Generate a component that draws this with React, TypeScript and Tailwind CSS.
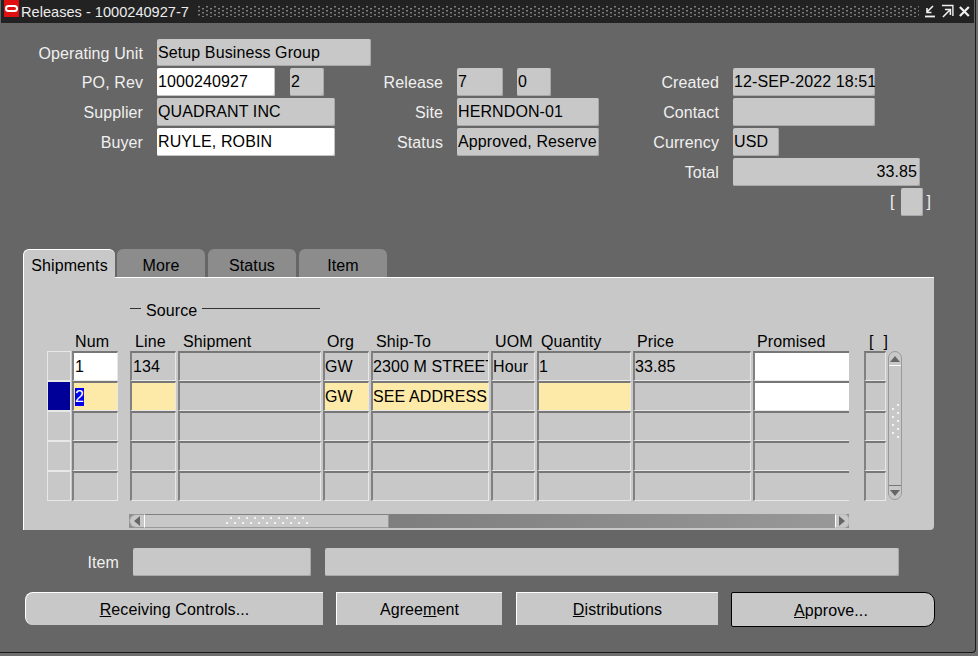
import React from "react";

const FONT = "font-['Liberation_Sans',Arial,sans-serif]";

function Label({ short, children }: { short?: boolean; children: React.ReactNode }) {
  return (
    <div className={`flex ${short ? "h-[27px]" : "h-[28px]"} items-center justify-end whitespace-nowrap pt-[2px] text-[#f0f0f0]`}>
      {children}
    </div>
  );
}

function Field({
  w,
  white,
  right,
  short,
  children,
}: {
  w: string;
  white?: boolean;
  right?: boolean;
  short?: boolean;
  children?: React.ReactNode;
}) {
  return (
    <div
      className={`${w} flex ${short ? "h-[27px]" : "h-[28px]"} shrink-0 items-center overflow-hidden whitespace-nowrap rounded-[2px] px-[1px] text-black ${
        white ? "bg-white shadow-[inset_-1px_-1px_0_#c4c4c4]" : "bg-[#c8c8c8] shadow-[inset_-1px_-1px_0_#a8a8a8]"
      } ${right ? "justify-end pr-[3px]" : ""}`}
    >
      {children}
    </div>
  );
}

function Grip({ w, h, vertical }: { w: number; h: number; vertical?: boolean }) {
  const dots: React.ReactNode[] = [];
  if (vertical) {
    for (let i = 0; i < 5; i++) {
      if (i < 4) dots.push(<rect key={`a${i}`} x={2} y={4 + i * 8} width={2} height={2} fill="#f2f2f2" />);
      dots.push(<rect key={`b${i}`} x={7} y={0 + i * 8} width={2} height={2} fill="#f2f2f2" />);
    }
  } else {
    for (let i = 0; i < 11; i++) {
      if (i < 10) dots.push(<rect key={`a${i}`} x={4 + i * 8} y={0} width={2} height={2} fill="#f2f2f2" />);
      dots.push(<rect key={`b${i}`} x={0 + i * 8} y={5} width={2} height={2} fill="#f2f2f2" />);
    }
  }
  return (
    <svg width={w} height={h} className="block">
      {dots}
    </svg>
  );
}

type Kind = "plain" | "white" | "yellow";

function Cell({ kind = "plain", pad, open, children }: { kind?: Kind; pad?: boolean; open?: boolean; children?: React.ReactNode }) {
  const bg = kind === "white" ? "bg-white" : kind === "yellow" ? "bg-[#fde9a8]" : "bg-[#c8c8c8]";
  return (
    <div
      className={`flex h-[30px] items-center overflow-hidden whitespace-nowrap border-b border-l-2 border-t-2 border-b-[#e8e8e8] border-l-[#808080] border-t-[#777777] text-black ${
        open ? "" : "border-r border-r-[#e8e8e8]"
      } ${pad ? "pl-px" : ""} ${bg}`}
    >
      {children}
    </div>
  );
}

function Sel({ on }: { on?: boolean }) {
  return <div className={`-mx-px h-[30px] border border-[#e8e8e8] ${on ? "bg-[#000099]" : "bg-[#c8c8c8]"}`} />;
}

function Head({ pad = "pl-[3px]", children }: { pad?: string; children?: React.ReactNode }) {
  return <div className={`h-[19px] whitespace-nowrap pt-px leading-[18px] text-black ${pad}`}>{children}</div>;
}

function Tab({ w, active, children }: { w: string; active?: boolean; children: React.ReactNode }) {
  return (
    <div
      className={`${w} flex items-center justify-center rounded-t-[6px] text-black ${
        active ? "relative z-10 -mb-px h-[29px] border-l border-t border-white bg-[#c8c8c8] pt-[4px]" : "h-[28px] bg-[#8c8c8c] pt-[6px]"
      }`}
    >
      {children}
    </div>
  );
}

const rows: { on?: boolean; cells: { k?: Kind; t?: React.ReactNode }[] }[] = [
  {
    cells: [
      { k: "white", t: "1" },
      { t: "134" },
      {},
      { t: "GW" },
      { t: "2300 M STREET" },
      { t: "Hour" },
      { t: "1" },
      { t: "33.85" },
      { k: "white" },
    ],
  },
  {
    on: true,
    cells: [
      { k: "yellow", t: <span className="bg-[#0000ee] text-white">2</span> },
      { k: "yellow" },
      {},
      { k: "yellow", t: "GW" },
      { k: "yellow", t: "SEE ADDRESS" },
      {},
      { k: "yellow" },
      {},
      { k: "white" },
    ],
  },
  { cells: Array.from({ length: 9 }, () => ({})) },
  { cells: Array.from({ length: 9 }, () => ({})) },
  { cells: Array.from({ length: 9 }, () => ({})) },
];

export default function App() {
  return (
    <div className={`${FONT} h-[656px] w-[978px] overflow-hidden bg-[#6e6e6e] text-[16px] leading-[18px] tracking-[0.1px]`}>
      <div className="flex h-[653px] w-[976px] flex-col rounded-br-[4px] border-b border-r border-[#1a1a1a] bg-[#666666] pl-[1px]">
        {/* Title bar */}
        <div className="flex h-[23px] w-[973px] items-center bg-[#222222] text-[14.6px] tracking-normal text-[#ececec]">
          <div className="ml-[3px] flex h-[17px] w-[15px] shrink-0 justify-center self-start bg-[#e01010] pt-[5px]">
            <div className="h-[7px] w-[13px] rounded-full border-2 border-white" />
          </div>
          <span className="ml-[2px] whitespace-nowrap">Releases - 1000240927-7</span>
          <svg width="724" height="11" className="ml-[9px]">
            <defs>
              <pattern id="dots" width="8" height="4" patternUnits="userSpaceOnUse">
                <rect x="0" y="0" width="2" height="1.5" fill="#7c7c7c" />
                <rect x="4" y="2" width="2" height="1.5" fill="#7c7c7c" />
              </pattern>
            </defs>
            <rect width="724" height="11" fill="url(#dots)" />
          </svg>
          <svg width="50" height="16" viewBox="0 0 50 16" className="ml-[5px]" fill="none" stroke="#f0f0f0">
            <path d="M9 2 L3 8 M3 4 V8.5 H7.5" strokeWidth="1.6" />
            <path d="M1 12.5 H11" strokeWidth="1.8" />
            <path d="M18 1.5 H29 V12" strokeWidth="1.4" />
            <path d="M19 13 L26 6 M21 5.5 H26.5 V11" strokeWidth="1.6" />
            <path d="M36 3 L45 12 M45 3 L36 12" strokeWidth="2.2" />
          </svg>
        </div>

        {/* Header form */}
        <div className="mt-[16px] grid grid-cols-[142px_214px_58px_179px_69px_200px] gap-x-[14px] gap-y-[2px]">
          <Label short>Operating Unit</Label>
          <Field w="w-[214px]" short>Setup Business Group</Field>
          <div className="col-span-4" />

          <Label>PO, Rev</Label>
          <div className="flex gap-[15px]">
            <Field w="w-[118px]" white>1000240927</Field>
            <Field w="w-[34px]">2</Field>
          </div>
          <Label>Release</Label>
          <div className="flex gap-[14px]">
            <Field w="w-[46px]">7</Field>
            <Field w="w-[34px]">0</Field>
          </div>
          <Label>Created</Label>
          <Field w="w-[142px]">12-SEP-2022 18:51</Field>

          <Label>Supplier</Label>
          <Field w="w-[178px]">QUADRANT INC</Field>
          <Label>Site</Label>
          <Field w="w-[142px]">HERNDON-01</Field>
          <Label>Contact</Label>
          <Field w="w-[142px]" />

          <Label>Buyer</Label>
          <Field w="w-[178px]" white>RUYLE, ROBIN</Field>
          <Label>Status</Label>
          <Field w="w-[142px]">Approved, Reserve</Field>
          <Label>Currency</Label>
          <Field w="w-[46px]">USD</Field>

          <div className="col-span-4" />
          <Label>Total</Label>
          <Field w="w-[187px]" right>33.85</Field>

          <div className="col-span-5" />
          <div className="flex h-[28px] items-center pl-[157px] text-[#f0f0f0]">
            <span>[</span>
            <div className="ml-[6px] mr-[4px]">
              <Field w="w-[22px]" />
            </div>
            <span>]</span>
          </div>
        </div>

        {/* Tabs */}
        <div className="ml-[22px] mt-[33px] flex w-[911px] flex-col">
          <div className="flex gap-[2px]">
            <Tab w="w-[92px]" active>Shipments</Tab>
            <Tab w="w-[88px]">More</Tab>
            <div className="ml-px">
              <Tab w="w-[88px]">Status</Tab>
            </div>
            <div className="ml-px">
              <Tab w="w-[88px]">Item</Tab>
            </div>
          </div>
          <div className="h-[253px] rounded-br-[4px] border-l border-t border-white bg-[#c8c8c8] pl-[24px] pt-[24px]">
            <div className="flex h-[18px] items-center pl-[82px] text-black">
              <div className="mb-[5px] h-px w-[11px] bg-[#333333]" />
              <span className="ml-[5px] mr-[5px]">Source</span>
              <div className="mb-[5px] h-px w-[118px] bg-[#333333]" />
            </div>
            <div className="mt-[12px] grid grid-cols-[22px_46px_8px_46px_143px_46px_118px_44px_94px_118px_96px_11px_22px_14px] gap-x-[2px]">
              <Head />
              <Head>Num</Head>
              <Head />
              <Head pad="pl-[5px]">Line</Head>
              <Head pad="pl-[5px]">Shipment</Head>
              <Head pad="pl-[4px]">Org</Head>
              <Head pad="pl-[5px]">Ship-To</Head>
              <Head pad="pl-[4px]">UOM</Head>
              <Head pad="pl-[4px]">Quantity</Head>
              <Head pad="pl-[4px]">Price</Head>
              <Head pad="pl-[4px]">Promised</Head>
              <Head />
              <div className="flex h-[19px] w-[24px] justify-between pl-[5px] pt-px leading-[18px] text-black">
                <span>[</span>
                <span>]</span>
              </div>
              <Head />

              <div className="col-start-14 row-span-5 row-start-2 flex h-[149px] flex-col rounded-[7px] border border-[#9a9a9a] bg-[#c8c8c8]">
                <div className="flex h-[14px] shrink-0 items-center justify-center rounded-t-[7px] border-b border-white">
                  <svg width="10" height="6" viewBox="0 0 10 6">
                    <path d="M5 0 L10 6 H0 Z" fill="#666666" />
                  </svg>
                </div>
                <div className="flex flex-1 items-center justify-center pb-[8px]">
                  <Grip w={10} h={36} vertical />
                </div>
                <div className="flex h-[14px] shrink-0 items-center justify-center rounded-b-[7px] border-t border-[#777777]">
                  <svg width="10" height="6" viewBox="0 0 10 6">
                    <path d="M0 0 H10 L5 6 Z" fill="#666666" />
                  </svg>
                </div>
              </div>

              {rows.map((r, i) => (
                <React.Fragment key={i}>
                  <Sel on={r.on} />
                  <Cell kind={r.cells[0].k} pad>
                    {r.cells[0].t}
                  </Cell>
                  <div />
                  {r.cells.slice(1).map((c, j) => (
                    <Cell key={j} kind={c.k} pad={j === 0} open={j === 7}>
                      {c.t}
                    </Cell>
                  ))}
                  <div />
                  <Cell />
                </React.Fragment>
              ))}
            </div>

            {/* Horizontal scrollbar */}
            <div className="ml-[81px] mt-[13px] flex h-[14px] w-[720px] bg-[#909090]">
              <div className="flex w-[16px] items-center justify-center rounded-l-[7px] border border-[#9a9a9a] border-r-white bg-[#c8c8c8]">
                <svg width="6" height="10" viewBox="0 0 6 10">
                  <path d="M6 0 V10 L0 5 Z" fill="#666666" />
                </svg>
              </div>
              <div className="flex w-[244px] items-center justify-center border-y border-r border-[#9a9a9a] border-t-[#808080] bg-[#c8c8c8]">
                <Grip w={82} h={8} />
              </div>
              <div className="flex-1 bg-gradient-to-r from-[#7e7e7e] to-[#989898]" />
              <div className="flex w-[14px] items-center justify-center rounded-r-[5px] border border-[#bdbdbd] border-l-white bg-[#c8c8c8]">
                <svg width="6" height="10" viewBox="0 0 6 10">
                  <path d="M0 0 L6 5 L0 10 Z" fill="#666666" />
                </svg>
              </div>
            </div>
          </div>
        </div>

        {/* Item row */}
        <div className="mt-[18px] flex">
          <div className="w-[118px]">
            <Label>Item</Label>
          </div>
          <div className="ml-[14px]">
            <Field w="w-[178px]" />
          </div>
          <div className="ml-[14px]">
            <Field w="w-[574px]" />
          </div>
        </div>

        {/* Buttons */}
        <div className="ml-[24px] mt-[16px] flex text-black">
          <div className="flex h-[33px] w-[298px] items-center justify-center rounded-l-[8px] border-l border-t border-white bg-[#c8c8c8] pt-[2px]">
            <span><u>R</u>eceiving Controls...</span>
          </div>
          <div className="ml-[13px] flex h-[33px] w-[166px] items-center justify-center border-l border-t border-white bg-[#c8c8c8] pt-[2px]">
            <span>Agree<u>m</u>ent</span>
          </div>
          <div className="ml-[14px] flex h-[33px] w-[202px] items-center justify-center border-l border-t border-white bg-[#c8c8c8] pt-[2px]">
            <span><u>D</u>istributions</span>
          </div>
          <div className="ml-[13px] flex h-[35px] w-[204px] items-center justify-center rounded-l-[2px] rounded-r-[10px] border border-black bg-[#c8c8c8] pr-[4px] pt-[2px]">
            <span><u>A</u>pprove...</span>
          </div>
        </div>
      </div>
    </div>
  );
}
